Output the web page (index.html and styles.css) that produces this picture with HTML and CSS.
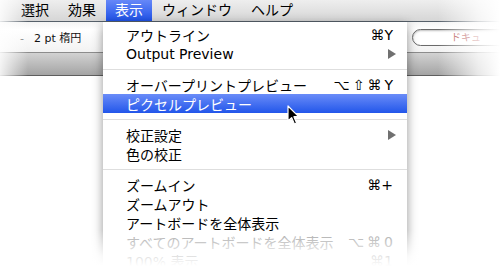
FILE: index.html
```html
<!DOCTYPE html>
<html lang="ja">
<head>
    <meta charset="UTF-8">
    <title>表示メニュー</title>
    <link rel="stylesheet" href="styles.css">
</head>
<body>
    <div class="screen">
        <div class="menubar">
            <span class="mb-item">選択</span>
            <span class="mb-item">効果</span>
            <span class="mb-item active">表示</span>
            <span class="mb-item">ウィンドウ</span>
            <span class="mb-item">ヘルプ</span>
        </div>
        <div class="toolbar">
            <div class="stroke"><span class="dash">-</span>2 pt 楕円</div>
            <div class="search">ドキュ</div>
        </div>
        <div class="band"></div>

        <div class="menu">
            <div class="item"><span>アウトライン</span><span class="key">⌘Y</span></div>
            <div class="item"><span>Output Preview</span><span class="arrow"></span></div>
            <div class="sep"></div>
            <div class="item"><span>オーバープリントプレビュー</span><span class="key wide">⌥⇧⌘Y</span></div>
            <div class="item selected"><span>ピクセルプレビュー</span></div>
            <div class="sep"></div>
            <div class="item"><span>校正設定</span><span class="arrow"></span></div>
            <div class="item"><span>色の校正</span></div>
            <div class="sep"></div>
            <div class="item"><span>ズームイン</span><span class="key">⌘+</span></div>
            <div class="item"><span>ズームアウト</span></div>
            <div class="item"><span>アートボードを全体表示</span></div>
            <div class="item disabled"><span>すべてのアートボードを全体表示</span><span class="key wide">⌥⌘0</span></div>
            <div class="item"><span>100% 表示</span><span class="key">⌘1</span></div>
        </div>

        <svg class="cursor" width="14" height="21" viewBox="0 0 14 21">
            <path d="M1 1 L1 16 L4.6 12.6 L7.4 19 L9.6 18 L6.9 11.7 L11.6 11.7 Z" fill="#000" stroke="#fff" stroke-width="1.2" stroke-linejoin="round"/>
        </svg>

        <div class="fade"></div>
    </div>
</body>
</html>
```

FILE: styles.css
```css
body {
    margin: 0;
    background: #ffffff;
    font-family: "DejaVu Sans", "Noto Sans CJK JP", sans-serif;
}
.screen {
    position: relative;
    width: 500px;
    height: 266px;
    overflow: hidden;
    background: #ffffff;
}
.menubar {
    display: flex;
    height: 21px;
    padding-left: 12px;
    background: linear-gradient(#eeeeee, #d6d6d6);
    border-bottom: 1px solid #56606a;
    font-size: 14px;
    color: #000;
}
.mb-item {
    padding: 0 9px;
    line-height: 21px;
}
.mb-item + .mb-item {
    margin-left: 1px;
}
.mb-item.active {
    background: linear-gradient(#6688f8, #1f52e8);
    color: #fff;
}
.toolbar {
    display: flex;
    justify-content: space-between;
    align-items: center;
    height: 30px;
    background: linear-gradient(#f4f4f4, #ffffff 25%, #f2f2f2);
    border-bottom: 1px solid #8c8c8c;
    font-size: 11px;
}
.stroke {
    padding-left: 20px;
    color: #111;
}
.dash {
    margin-right: 10px;
    color: #777;
}
.search {
    width: 62px;
    height: 15px;
    margin-right: -14px;
    padding-left: 38px;
    border: 1px solid #6a6a6a;
    border-radius: 9px;
    background: #fff;
    box-shadow: inset 0 1px 2px rgba(0, 0, 0, 0.25);
    color: #b04848;
    font-size: 10px;
    line-height: 15px;
}
.band {
    height: 22px;
    background: linear-gradient(#d2d2d2, #a4a4a4);
    border-bottom: 1px solid #5e5e5e;
}
.menu {
    position: absolute;
    left: 103px;
    top: 22px;
    width: 304px;
    padding-top: 3px;
    padding-bottom: 4px;
    background: #ffffff;
    box-shadow: 0 3px 10px rgba(0, 0, 0, 0.42);
    font-size: 14px;
    color: #000;
}
.item {
    display: flex;
    justify-content: space-between;
    align-items: center;
    height: 19px;
    padding: 0 14px 0 23px;
    white-space: nowrap;
}
.item.selected {
    background: linear-gradient(#6a8cf8, #2256ea);
    color: #fff;
}
.item.disabled {
    color: #a2a2a2;
}
.key {
    font-family: "DejaVu Sans", sans-serif;
    font-size: 14px;
}
.key.wide {
    letter-spacing: 3px;
    margin-right: -3px;
}
.arrow {
    width: 0;
    height: 0;
    margin-right: -3px;
    border-top: 5px solid transparent;
    border-bottom: 5px solid transparent;
    border-left: 8px solid #707070;
}
.sep {
    height: 1px;
    margin: 6px 0 5px;
    background: #dedede;
}
.cursor {
    position: absolute;
    left: 287px;
    top: 105px;
}
.fade {
    position: absolute;
    inset: 0;
    pointer-events: none;
    background:
        linear-gradient(to right, rgba(255, 255, 255, 0.85) 0, rgba(255, 255, 255, 0) 28px),
        linear-gradient(to left, #ffffff 0, rgba(255, 255, 255, 0.75) 22px, rgba(255, 255, 255, 0) 62px),
        linear-gradient(to top, #ffffff 0, rgba(255, 255, 255, 0.88) 10px, rgba(255, 255, 255, 0) 36px);
}
```
